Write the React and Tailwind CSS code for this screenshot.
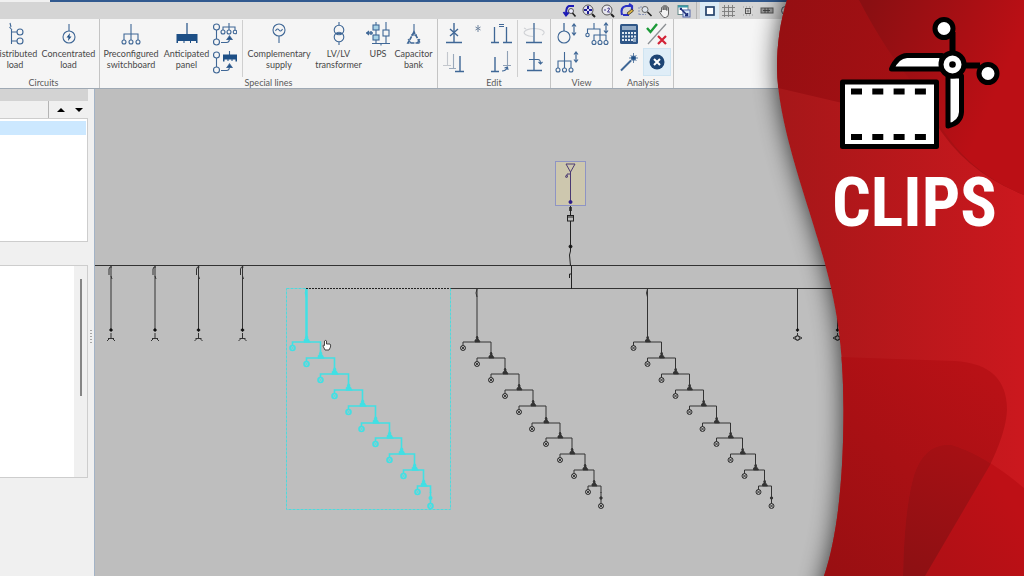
import React from 'react';
import { FiSearch } from 'react-icons/fi';

/* Ribbon icons, all on a 24x24 grid */

const Icon = ({ children }) => (
  <svg viewBox="0 0 24 24" className="w-6 h-6 shrink-0" fill="none" stroke="#3f6796" strokeWidth="1.1">
    {children}
  </svg>
);

const DistributedIcon = () => (
  <Icon>
    <path d="M7 1l1 4M6.500 5l2.500 3M8.500 8v14M8.500 10H14M8.500 19H14" />
    <circle cx="17" cy="10" r="3" />
    <circle cx="17" cy="19" r="3" />
  </Icon>
);

const ConcentratedIcon = () => (
  <Icon>
    <path d="M12 2v7" />
    <circle cx="12" cy="15" r="6" />
    <path d="M13 11l-3.500 4.500h2L11 19l3.500-4.500h-2z" fill="#1d4f86" stroke="none" />
  </Icon>
);

const SwitchboardIcon = () => (
  <Icon>
    <path d="M12 2v16M5 18v-6h14v6" />
    <circle cx="5" cy="20" r="2" />
    <circle cx="12" cy="20" r="2" />
    <circle cx="19" cy="20" r="2" />
  </Icon>
);

const PanelIcon = () => (
  <Icon>
    <path d="M12 1v11" strokeWidth="1.4" />
    <path d="M1.500 12h21v9h-1.500v-2h-5v2h-1v-2H9.500v2h-1v-2H3v2H1.500z" fill="#1d4f86" stroke="none" />
  </Icon>
);

const LinkBase = () => (
  <>
    <circle cx="3.500" cy="5" r="3" />
    <circle cx="3.500" cy="20" r="3" />
    <path d="M3.500 8v9M8 20.500h5.500q3 0 3-4" />
    <path d="M14 17.500l2.500-3.500 2.500 3.500z" fill="#1d4f86" />
  </>
);

const LinkSwitchboardIcon = () => (
  <Icon>
    <LinkBase />
    <path d="M16 1v7M10 8V5h12v3" />
    <circle cx="10" cy="10" r="2" />
    <circle cx="16" cy="10" r="2" />
    <circle cx="22" cy="10" r="1.800" />
  </Icon>
);

const LinkPanelIcon = () => (
  <Icon>
    <LinkBase />
    <path d="M16.500 1v4" />
    <path d="M10 4.500h14v7h-1.500v-2h-3v1.500h-1V9.500h-3V11h-1V9.500h-3v2H10z" fill="#1d4f86" stroke="none" />
  </Icon>
);

const SupplyIcon = () => (
  <Icon>
    <circle cx="12" cy="8" r="6" />
    <path d="M8.500 9q1.700-3.500 3.500-1t3.500-1M12 14v7" />
  </Icon>
);

const TransformerIcon = () => (
  <Icon>
    <circle cx="12" cy="8" r="4.800" />
    <circle cx="12" cy="15" r="4.800" />
    <path d="M12 0v3M12 20v3M9 11.500h6" />
  </Icon>
);

const UpsIcon = () => (
  <Icon>
    <path d="M10 0v21M20 0v21M6 21.500h18M15 21.500v2" />
    <path d="M0 11h7M3 9l-2 2 2 2M5 9v4" strokeWidth="1.400" />
    <rect x="7" y="3" width="6" height="5" fill="#a9d3e6" />
    <rect x="7" y="13" width="6" height="5" fill="#a9d3e6" />
    <rect x="17" y="8" width="6" height="6" fill="#f5f5f5" />
  </Icon>
);

const CapacitorIcon = () => (
  <Icon>
    <path d="M12 2v9" />
    <path d="M12 10L6 21h12z" strokeWidth="1.700" strokeDasharray="4 1" />
    <path d="M9 13h6M6 17l3 4M18 17l-3 4" />
  </Icon>
);

const DeleteLineIcon = () => (
  <Icon>
    <path d="M12 1v19M4 20.500h16" strokeWidth="1.400" />
    <path d="M8 7l8 7M16 7l-8 7" strokeWidth="1.400" />
  </Icon>
);

const StarIcon = () => (
  <svg viewBox="0 0 12 24" className="w-3 h-6" fill="none" stroke="#7186a0">
    <path d="M6 3v7M3.500 5l5 3M8.500 5l-5 3" />
  </svg>
);

const CopyLineIcon = () => (
  <Icon>
    <path d="M5.500 5v15M17.500 5v15M2 20.500h8M14 20.500h9" strokeWidth="1.300" />
    <path d="M10 2.500h5M10 4.500h5" />
  </Icon>
);

const RotateIcon = () => (
  <Icon>
    <path d="M20 13a10 4 0 1 0-9 1.500M4 7l-2-1" stroke="#d0d2d6" />
    <path d="M12 1v19M4 20.500h16" strokeWidth="1.300" />
  </Icon>
);

const ShiftIcon = () => (
  <Icon>
    <path d="M5.500 2v13M1 15.500h8" stroke="#c3c7cd" />
    <path d="M11.500 4v14M7 18.500h7" stroke="#9aa9bb" />
    <path d="M18 6v15M13 21.500h9" strokeWidth="1.400" />
  </Icon>
);

const MoveIcon = () => (
  <Icon>
    <path d="M6 7v14M2 21.500h8" strokeWidth="1.400" />
    <path d="M18.500 1v15M14 15.500h8" stroke="#8fa0b5" />
    <path d="M13 21q4 0 5.500-4M15.500 18l3-1 .5 3" />
  </Icon>
);

const InsertIcon = () => (
  <Icon>
    <path d="M12 2v18M5 20.500h15" strokeWidth="1.300" />
    <path d="M7 9.500h9q2.500 0 2.500 4M16.500 12l2 2 2-2" />
  </Icon>
);

const UpDown = ({ d }) => <path d={d} strokeWidth="1.200" />;

const ViewLoadIcon = () => (
  <Icon>
    <path d="M9 1v8" strokeWidth="1.300" />
    <circle cx="9" cy="15" r="6" />
    <UpDown d="M19 2v11M17 4.500l2-2.500 2 2.500M17 10.500l2 2.500 2-2.500" />
  </Icon>
);

const ViewTreeIcon = () => (
  <Icon>
    <path d="M9 1v6M2.500 11V7H15v12M9 19v-6h12v6" />
    <circle cx="2.500" cy="13" r="1.700" />
    <circle cx="9" cy="20.500" r="2" />
    <circle cx="15" cy="20.500" r="2" />
    <circle cx="21" cy="20.500" r="2" />
    <UpDown d="M21 1v10M19 3.500L21 1l2 2.500M19 8.500l2 2.500 2-2.500" />
  </Icon>
);

const ViewBranchIcon = () => (
  <Icon>
    <path d="M9.500 2v16M3 18v-7h13v7" />
    <circle cx="3" cy="20" r="2" />
    <circle cx="9.500" cy="20" r="2" />
    <circle cx="16" cy="20" r="2" />
    <UpDown d="M21 2v10M19 4.500L21 2l2 2.500M19 9.500l2 2.500 2-2.500" />
  </Icon>
);

const CalculatorIcon = () => (
  <Icon>
    <rect x="3" y="2" width="18" height="20" rx="1.500" fill="#2f5687" stroke="none" />
    <rect x="5" y="4" width="14" height="4" fill="#93abc6" stroke="none" />
    <path d="M5 11h14M5 14.500h14M5 18h14" stroke="#dfe8f2" strokeWidth="1.800" strokeDasharray="2 1" />
    <path d="M16 16h3v4h-3z" fill="#93abc6" stroke="none" />
  </Icon>
);

const CheckIcon = () => (
  <Icon>
    <path d="M21 2L3 22" stroke="#8c9094" strokeWidth="1.300" />
    <path d="M2 6l3.500 4L12 2" stroke="#1c9a38" strokeWidth="2.400" />
    <path d="M13 14l8 8M21 14l-8 8" stroke="#d32236" strokeWidth="2.200" />
  </Icon>
);

const WandIcon = () => (
  <Icon>
    <path d="M4 20.500L14 10.500" strokeWidth="2" />
    <path d="M16.500 3v10M12 8h9M13.500 5l6 6M19.500 5l-6 6" strokeWidth=".8" />
    <circle cx="16.500" cy="8" r="2" fill="#1d4f86" />
  </Icon>
);

const StopIcon = () => (
  <Icon>
    <circle cx="12" cy="12" r="7.500" fill="#1d4474" stroke="none" />
    <path d="M9 9l6 6M15 9l-6 6" stroke="#fff" strokeWidth="2" />
  </Icon>
);

/* Quick bar icons, 16x16 */

const QIcon = ({ children }) => (
  <svg viewBox="0 0 16 16" className="w-4 h-4" fill="none" stroke="#222">
    {children}
  </svg>
);

const quickTools = [
  {
    name: 'Previous zoom',
    icon: (
      <QIcon>
        <path d="M12 3H7Q4 4 4 11M1.500 9L4 12.500 7 9" stroke="#1d1bb5" strokeWidth="2" />
        <circle cx="9" cy="8" r="2.500" fill="#eef" stroke="#555" />
        <path d="M10.500 10l3 3.500" strokeWidth="1.600" />
      </QIcon>
    ),
  },
  {
    name: 'Zoom to fit',
    icon: (
      <QIcon>
        <circle cx="7" cy="7" r="5" fill="#dfe0f0" stroke="#555" />
        <path d="M7 3v8M3 7h8" stroke="#1d1b95" strokeWidth="2" strokeDasharray="3 2" />
        <path d="M11 11l3 3" strokeWidth="2" />
      </QIcon>
    ),
  },
  {
    name: 'Zoom by two',
    icon: (
      <QIcon>
        <circle cx="7" cy="7" r="5" fill="#e6e6ee" stroke="#555" />
        <path d="M4 7h2M7.500 5.500q2-1.500 2 .5L7.500 9H10" stroke="#433a8a" />
        <path d="M11 11l3 3" strokeWidth="2" />
      </QIcon>
    ),
  },
  {
    name: 'Redraw',
    icon: (
      <QIcon>
        <path d="M3 12Q1 4 7 3h5M10 1l3 2v4" stroke="#2a31c4" strokeWidth="2.200" />
        <path d="M4 12h6" stroke="#2a31c4" strokeWidth="2" />
        <path d="M8 10l5-4 1.500 2-5 4z" fill="#d8b040" strokeWidth=".7" />
      </QIcon>
    ),
  },
  {
    name: 'Zoom window',
    icon: (
      <QIcon>
        <path d="M1 12V4h6M1 11.500h7" stroke="#8894b8" strokeDasharray="2 1" />
        <circle cx="7" cy="6.500" r="3" fill="#dde4ee" stroke="#666" />
        <path d="M9.500 9l4 4" strokeWidth="1.600" />
      </QIcon>
    ),
  },
  {
    name: 'Pan',
    icon: (
      <QIcon>
        <path
          d="M4.500 9V4.500q1-1 1.700 0V7 3q1-1 1.800 0v4-4q1-1 1.800 0v4.500-3q1-1 1.700 0V11q0 3-3 3.500H7Q5.500 14 2.500 9q.5-1.500 2 0z"
          fill="#f2f2f2"
          stroke="#555"
          strokeWidth=".9"
        />
      </QIcon>
    ),
  },
  {
    name: 'Fit window',
    icon: (
      <QIcon>
        <rect x="2" y="2.500" width="10" height="9" fill="#fff" stroke="#688" />
        <path d="M2 3.500h10" stroke="#3a9aa8" strokeWidth="2" />
        <rect x="7" y="7" width="7" height="7" fill="#cfe0f4" stroke="#56a" />
        <path d="M5 6l6 6M6 5.500H4.500V7M11.500 10v2.500H9" stroke="#1f2f7a" strokeWidth="1.500" />
      </QIcon>
    ),
  },
];

const displayTools = [
  {
    name: 'Frame',
    active: true,
    icon: (
      <QIcon>
        <rect x="4" y="4" width="8" height="8" fill="#fff" stroke="#24426b" strokeWidth="1.700" />
      </QIcon>
    ),
  },
  {
    name: 'Grid',
    icon: (
      <QIcon>
        <path d="M3.500 2v12M7.500 2v12M11.500 2v12M1 4.500h13M1 8.500h13M1 12.500h13" stroke="#7b7b7b" strokeWidth=".9" />
      </QIcon>
    ),
  },
  {
    name: 'Snap',
    icon: (
      <QIcon>
        <rect x="5.500" y="5.500" width="5" height="5" stroke="#555" />
        <path d="M8 6.500v3M6.500 8h3" stroke="#777" />
        <path d="M3 4h10M3 12h10" stroke="#999" strokeDasharray="1 2" />
      </QIcon>
    ),
  },
  {
    name: 'Keyboard',
    icon: (
      <QIcon>
        <rect x="2" y="5" width="12" height="5" fill="#999" stroke="#555" />
        <path d="M4 7.500h7M6 5v5M9 5v5" stroke="#444" />
      </QIcon>
    ),
  },
  {
    name: 'Find',
    icon: <FiSearch className="w-3 h-3 text-gray-600" />,
  },
];

const QuickButton = ({ tool }) => (
  <button
    type="button"
    aria-label={tool.name}
    className={`flex items-center justify-center w-[19px] h-full ${tool.active ? 'bg-[#dcebf5]' : ''}`}
  >
    {tool.icon}
  </button>
);

const QuickBar = () => (
  <div className="flex items-center h-[17px] pl-[560px] bg-[#d5d5d5]">
    {quickTools.map((tool) => (
      <QuickButton key={tool.name} tool={tool} />
    ))}
    <div className="w-px h-full mx-[3px] bg-[#b5b5b5]" />
    {displayTools.map((tool) => (
      <QuickButton key={tool.name} tool={tool} />
    ))}
  </div>
);

/* Ribbon */

const RibbonButton = ({ icon, lines, className }) => (
  <button type="button" className={`flex flex-col items-center shrink-0 ${className}`}>
    <span className="flex items-center h-7">{icon}</span>
    {lines.map((line) => (
      <span key={line} className="text-[9px] leading-[11px] whitespace-nowrap">
        {line}
      </span>
    ))}
  </button>
);

const ToolButton = ({ icon, label, active, className = 'w-7' }) => (
  <button
    type="button"
    aria-label={label}
    className={`flex items-center justify-center h-7 ${className} ${active ? 'bg-[#dfedf7] border border-[#cfe4f1]' : ''}`}
  >
    {icon}
  </button>
);

const RibbonGroup = ({ title, className, children }) => (
  <section className={`flex flex-col shrink-0 border-r border-[#c4c4c4] ${className}`}>
    <div className="flex h-[58px] pt-px">{children}</div>
    <h2 className="text-[9px] leading-[11px] text-center text-[#5a5a5a]">{title}</h2>
  </section>
);

const Divider = ({ className }) => <div className={`w-px shrink-0 bg-[#cfcfcf] ${className}`} />;

const Ribbon = () => (
  <header className="flex h-[70px] bg-[#f5f5f5] border-b border-[#9fa9b4] text-[#484848] overflow-hidden">
    <RibbonGroup title="Circuits" className="w-[112px] -ml-3">
      <RibbonButton icon={<DistributedIcon />} lines={['Distributed', 'load']} className="w-[54px]" />
      <RibbonButton icon={<ConcentratedIcon />} lines={['Concentrated', 'load']} className="w-[53px]" />
    </RibbonGroup>
    <RibbonGroup title="Special lines" className="w-[338px]">
      <RibbonButton icon={<SwitchboardIcon />} lines={['Preconfigured', 'switchboard']} className="w-[62px]" />
      <RibbonButton icon={<PanelIcon />} lines={['Anticipated', 'panel']} className="w-[49px]" />
      <div className="flex flex-col">
        <ToolButton icon={<LinkSwitchboardIcon />} label="Link to switchboard" />
        <ToolButton icon={<LinkPanelIcon />} label="Link to panel" />
      </div>
      <Divider className="ml-[3px]" />
      <RibbonButton icon={<SupplyIcon />} lines={['Complementary', 'supply']} className="w-[72px]" />
      <RibbonButton icon={<TransformerIcon />} lines={['LV/LV', 'transformer']} className="w-[47px]" />
      <RibbonButton icon={<UpsIcon />} lines={['UPS']} className="w-[32px]" />
      <RibbonButton icon={<CapacitorIcon />} lines={['Capacitor', 'bank']} className="w-[39px]" />
    </RibbonGroup>
    <RibbonGroup title="Edit" className="w-[113px]">
      <div className="grid grid-cols-[28px_19px_28px] content-start ml-[2px]">
        <ToolButton icon={<DeleteLineIcon />} label="Delete line" />
        <ToolButton icon={<StarIcon />} label="New" className="w-[19px]" />
        <ToolButton icon={<CopyLineIcon />} label="Copy line" />
        <ToolButton icon={<ShiftIcon />} label="Shift" />
        <span />
        <ToolButton icon={<MoveIcon />} label="Move" />
      </div>
      <Divider className="mx-[2px]" />
      <div className="flex flex-col">
        <ToolButton icon={<RotateIcon />} label="Rotate" />
        <ToolButton icon={<InsertIcon />} label="Insert" />
      </div>
    </RibbonGroup>
    <RibbonGroup title="View" className="w-[62px]">
      <div className="grid grid-cols-2 content-start gap-x-[2px] ml-[2px]">
        <ToolButton icon={<ViewLoadIcon />} label="Load view" />
        <ToolButton icon={<ViewTreeIcon />} label="Tree view" />
        <ToolButton icon={<ViewBranchIcon />} label="Branch view" />
      </div>
    </RibbonGroup>
    <RibbonGroup title="Analysis" className="w-[61px]">
      <div className="grid grid-cols-2 content-start ml-[2px]">
        <ToolButton icon={<CalculatorIcon />} label="Calculate" />
        <ToolButton icon={<CheckIcon />} label="Check" />
        <ToolButton icon={<WandIcon />} label="Wizard" />
        <ToolButton icon={<StopIcon />} label="Stop" active />
      </div>
    </RibbonGroup>
  </header>
);

/* Side panel */

const SidePanel = () => (
  <aside className="flex flex-col w-[88px] shrink-0">
    <div className="h-[12px] bg-[#d3d3d3]" />
    <div className="flex justify-end items-center h-[17px]">
      <div className="w-px h-full bg-[#b4b4b4]" />
      <button type="button" aria-label="Move up" className="flex justify-center w-[18px] ml-[3px]">
        <svg viewBox="0 0 8 4" className="w-2 h-1">
          <path d="M0 4l4-4 4 4z" />
        </svg>
      </button>
      <button type="button" aria-label="Move down" className="flex justify-center w-[18px]">
        <svg viewBox="0 0 8 4" className="w-2 h-1">
          <path d="M0 0h8L4 4z" />
        </svg>
      </button>
    </div>
    <div className="h-[124px] pt-[2px] pr-px bg-white border border-l-0 border-[#cdcdcd]">
      <div className="h-[14px] bg-[#cce8ff]" />
    </div>
    <div className="flex justify-end h-[213px] mt-[23px] bg-white border border-l-0 border-[#cdcdcd]">
      <div className="w-[13px] pl-[6px] pt-[13px] bg-[#f0f0f0]">
        <div className="w-[2px] h-[117px] bg-[#858585]" />
      </div>
    </div>
  </aside>
);

const Splitter = () => (
  <div className="flex flex-col items-center gap-[2px] w-[6px] shrink-0 pt-[241px]">
    {[...Array(5)].map((_, i) => (
      <div key={i} className="w-[2px] h-px bg-[#a5a5a5]" />
    ))}
  </div>
);

/* Single line diagram */

const nodes = [
  [0, 0], [14, 16], [28, 32], [42, 48], [56, 64],
  [69, 81], [83, 96], [95, 112], [108, 128], [117, 144],
];
const lampX = [-14, 0, 14, 28, 42, 55, 69, 83, 97, 111];

const Lamp = ({ x, y }) => (
  <g>
    <circle cx={x} cy={y} r="2.500" />
    <path d={`M${x - 2} ${y - 2}l4 4M${x + 2} ${y - 2}l-4 4`} strokeWidth=".9" />
  </g>
);

const Chain = ({ x, color, selected }) => (
  <g transform={`translate(${x} 342)`} stroke={color} fill="none" strokeWidth={selected ? 1.6 : 1}>
    <path d="M0-53V-3" strokeWidth={selected ? 2.5 : 1} />
    <path d="M0-53l-1 4 1 4" />
    {nodes.map(([nx, ny], i) => {
      const next = nodes[i + 1] || [124, 153];
      return (
        <g key={nx}>
          <path d={`M${lampX[i]} ${ny + 4}V${ny}H${next[0]}V${next[1] - 2}`} />
          <path
            d={`M${nx - 2} ${ny}v-2l2-1-1-1 1-2 1 1v2l1 1 1 2z`}
            fill={color}
            strokeWidth={selected ? 1.5 : 0.8}
          />
          <Lamp x={lampX[i]} y={ny + 6} />
        </g>
      );
    })}
    <circle cx="124" cy="156" r="1.200" fill={color} />
    <path d="M124 150v12" />
    <Lamp x={124} y={164} />
  </g>
);

const Feeder = ({ x }) => (
  <g transform={`translate(${x} 0)`} stroke="#333" fill="none">
    <path d="M0 266v64M-2 275v-6l1-2h2M0 276l1 3" />
    <path d="M-1 331l2-2" stroke="#111" strokeWidth="3" />
    <path d="M0 333v5M-3 338.500h6M-4 341l3-3M4 341l-3-3" />
  </g>
);

const Outlet = ({ x }) => (
  <g transform={`translate(${x} 0)`} stroke="#333" fill="none">
    <path d="M0 289v41M0 333v3" />
    <path d="M-1 331l2-2" stroke="#111" strokeWidth="2.500" />
    <path d="M-4.500 338L0 335.500 4.500 338 0 340.500z" />
    <circle cx="0" cy="338" r="2" />
  </g>
);

const Diagram = () => (
  <svg viewBox="95 89 929 487" width="929" height="487" className="block" fill="none">
    <path d="M95 265.500H900M450 288.500H900" stroke="#333" />
    {[111, 155, 198.500, 242.500].map((x) => (
      <Feeder key={x} x={x} />
    ))}
    {/* incoming supply */}
    <rect x="555.500" y="161.500" width="30" height="44" fill="#cdc7ae" stroke="#8e94c4" />
    <g stroke="#4b3a72">
      <path d="M566 164h9l-4.500 8zM570.500 172v29M570 174h-3v3" />
      <circle cx="566.500" cy="176.500" r="1" />
      <circle cx="570.500" cy="202" r="1.500" fill="#2a1a8a" stroke="#2a1a8a" />
    </g>
    <g stroke="#222">
      <path d="M570.500 206v45l-1 4 1 11M571.500 266v23M569.500 278v-4h2" />
      <path d="M570.500 207v4" strokeWidth="2.500" />
      <rect x="567.500" y="215.500" width="6" height="5.500" fill="#bebebe" />
      <path d="M567.500 217h6" />
      <circle cx="570.500" cy="246.500" r="1.500" fill="#111" />
    </g>
    <rect x="286.500" y="288.500" width="164" height="221" stroke="#50d9dc" strokeDasharray="3 1" />
    <Chain x={306.500} color="#41e0e4" selected />
    <path d="M306 288.500H450" stroke="#bebebe" strokeWidth="1" />
    <path d="M306 288.500H450" stroke="#222" strokeWidth="1" strokeDasharray="2 1" />
    <Chain x={477} color="#333" />
    <Chain x={647.500} color="#333" />
    <Outlet x={797.500} />
    <Outlet x={837.500} />
    <path
      d="M324.500 341q1.500-1.500 2 0v3h3.500q1 .5.500 3l-1.500 3h-4l-2-4q0-1.500 1.500-.5z"
      fill="#fff"
      stroke="#333"
      strokeWidth=".9"
    />
  </svg>
);

/* Red banner lying over the right side of the window */

const edge =
  'M787 0C780 22 777 45 777 67C777 120 805 195 818 240C835 295 843.500 340 843.500 410C843.500 475 838 535 824 576';

const BannerShape = () => (
  <svg viewBox="704 0 320 576" preserveAspectRatio="xMaxYMid slice" className="absolute inset-0 w-full h-full">
    <defs>
      <linearGradient id="base" x1="780" y1="0" x2="1024" y2="0" gradientUnits="userSpaceOnUse">
        <stop offset="0" stopColor="#a61719" />
        <stop offset="1" stopColor="#cb181e" />
      </linearGradient>
      <linearGradient id="topLeft" x1="778" y1="0" x2="950" y2="60" gradientUnits="userSpaceOnUse">
        <stop offset="0" stopColor="#950f12" />
        <stop offset="1" stopColor="#a81014" />
      </linearGradient>
      <linearGradient id="topRight" x1="870" y1="0" x2="1010" y2="60" gradientUnits="userSpaceOnUse">
        <stop offset="0" stopColor="#8a0f12" />
        <stop offset="1" stopColor="#bb0f15" />
      </linearGradient>
      <linearGradient id="low" x1="830" y1="570" x2="1000" y2="390" gradientUnits="userSpaceOnUse">
        <stop offset="0" stopColor="#990f12" />
        <stop offset="1" stopColor="#b81116" />
      </linearGradient>
      <linearGradient id="corner" x1="910" y1="570" x2="1010" y2="500" gradientUnits="userSpaceOnUse">
        <stop offset="0" stopColor="#ad1015" />
        <stop offset="1" stopColor="#be1016" />
      </linearGradient>
      <linearGradient id="overlap" x1="910" y1="576" x2="970" y2="450" gradientUnits="userSpaceOnUse">
        <stop offset="0" stopColor="#8d1013" />
        <stop offset="1" stopColor="#a61014" />
      </linearGradient>
      <clipPath id="bannerClip">
        <path d={`${edge}H1024V0z`} />
      </clipPath>
      <clipPath id="lowClip">
        <path d="M840 357L955 361Q1007 364 1007 410Q1006 432 990 465L925 576H800z" />
      </clipPath>
      <filter id="soft" x="-30%" y="-10%" width="160%" height="120%">
        <feGaussianBlur stdDeviation="12" />
      </filter>
    </defs>
    <path
      d="M793-40L787 0C780 22 777 45 777 67C777 120 805 195 818 240C835 295 843.500 340 843.500 410C843.500 475 838 535 824 576L815 620H1060V-40z"
      fill="#111"
      opacity=".75"
      filter="url(#soft)"
    />
    <g clipPath="url(#bannerClip)">
      <rect x="770" width="254" height="576" fill="url(#base)" />
      <path d="M770 86L838 102L935 122Q965 172 1024 195V0H770z" fill="url(#topLeft)" />
      <path d="M859 0Q885 50 912 82Q930 112 948 137Q975 175 1024 195V0z" fill="url(#topRight)" />
      <path d="M840 357L955 361Q1007 364 1007 410Q1006 432 990 465L925 576H800z" fill="url(#low)" />
      <path d="M903 576Q904 510 914 475Q925 442 952 445Q985 455 1024 488V576z" fill="url(#corner)" />
      <path
        d="M903 576Q904 510 914 475Q925 442 952 445Q985 455 1024 488V576z"
        fill="url(#overlap)"
        clipPath="url(#lowClip)"
      />
    </g>
  </svg>
);

const ClipsLogo = () => (
  <svg viewBox="838 16 164 136" className="w-[164px] h-[136px] self-end">
    <rect x="842.500" y="82" width="94" height="64.500" fill="#fff" stroke="#000" strokeWidth="5" strokeLinejoin="round" />
    <path d="M851 91.500h75M851 137h75" stroke="#000" strokeWidth="6" strokeDasharray="11 10.300" />
    <g stroke="#000" strokeWidth="5" strokeLinejoin="round" fill="#fff">
      <path d="M891.500 69Q897 56 907 55.500H942V69z" />
      <path d="M948 76V126Q961 123 961.500 112V76z" />
      <path d="M952.500 32V56M963 65.500H980" strokeWidth="6" />
      <circle cx="944" cy="28.500" r="9" />
      <circle cx="988" cy="73.500" r="9" />
      <circle cx="952.500" cy="64.500" r="11.500" />
    </g>
    <circle cx="952.500" cy="64.500" r="3.300" />
  </svg>
);

const Banner = () => (
  <div className="absolute inset-y-0 right-0 w-[320px] overflow-hidden">
    <BannerShape />
    <div className="relative flex flex-col items-start w-[170px] ml-auto mr-[22px] pt-4">
      <ClipsLogo />
      <p className="mt-[17px] text-[68px] leading-[68px] font-bold text-white font-['Roboto_Condensed','Liberation_Sans_Narrow','Roboto',sans-serif]">
        CLIPS
      </p>
    </div>
  </div>
);

export default function App() {
  return (
    <div className="relative flex flex-col h-screen overflow-hidden bg-[#f0f0f0] font-['Lato','Noto_Sans',sans-serif]">
      <div className="h-[2px] shrink-0 ml-[50px] bg-[#31598f]" />
      <QuickBar />
      <Ribbon />
      <main className="flex flex-1 min-h-0">
        <SidePanel />
        <Splitter />
        <div className="flex-1 min-w-0 overflow-hidden border-l border-[#a3b3c6] bg-[#bebebe]">
          <Diagram />
        </div>
      </main>
      <Banner />
    </div>
  );
}
